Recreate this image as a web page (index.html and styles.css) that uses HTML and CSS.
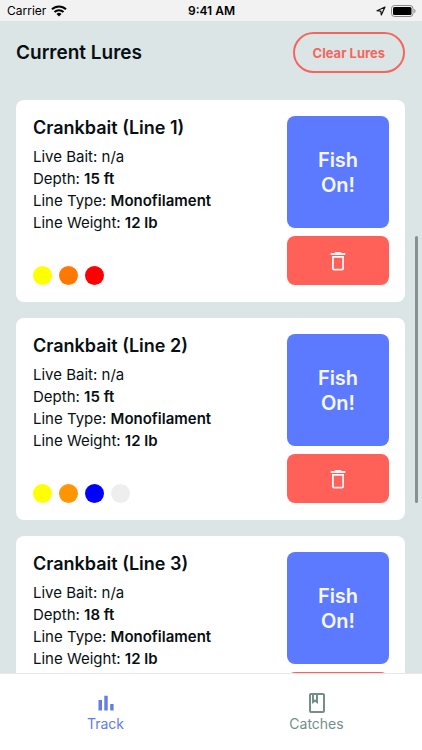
FILE: index.html
```html
<!DOCTYPE html>
<html lang="en">
<head>
<meta charset="utf-8">
<meta name="viewport" content="width=device-width, initial-scale=1">
<title>Current Lures</title>
<link rel="stylesheet" href="styles.css">
</head>
<body>
<svg class="sprite" aria-hidden="true">
  <symbol id="trash" viewBox="0 0 24 24"><path d="M6 19.500c0 1.100.9 2 2 2h8c1.100 0 2-.9 2-2V7H6v12.500zM7.800 8.800h8.400v10.900H7.800V8.800zM15.500 4l-1-1h-5l-1 1H4.700v2h14.600V4h-3.800z"/></symbol>
</svg>
<div class="status">
  <div class="status-left">
    <span>Carrier</span>
    <svg width="16" height="12" viewBox="0 0 16 12" aria-hidden="true">
      <path d="M1 4.300a10 10 0 0 1 14 0M3.500 7a6.400 6.400 0 0 1 9 0" fill="none" stroke="#000" stroke-width="2"/>
      <path d="M8 11.500 5.500 9a3.600 3.600 0 0 1 5 0z"/>
    </svg>
  </div>
  <strong class="status-time">9:41 AM</strong>
  <div class="status-right">
    <svg width="10" height="10" viewBox="0 0 10 10" aria-hidden="true"><path d="M9 1 1 4.700l3.800.5L5.300 9z" fill="none" stroke="#111" stroke-width="1.200" stroke-linejoin="round"/></svg>
    <svg width="25" height="12" viewBox="0 0 25 12" aria-hidden="true">
      <rect x=".5" y=".5" width="21.500" height="11" rx="3" fill="none" stroke="#888"/>
      <rect x="2" y="2" width="18.500" height="8" rx="1.500"/>
      <path d="M23.300 4v4c.8-.3 1.200-1.100 1.200-2s-.4-1.700-1.200-2z" fill="#888"/>
    </svg>
  </div>
</div>
<main class="screen">
  <header class="header">
    <h1>Current Lures</h1>
    <button class="clear" type="button">Clear Lures</button>
  </header>
  <section class="cards">
    <article class="card">
      <div class="info">
        <h2>Crankbait (Line 1)</h2>
        <p>Live Bait: n/a</p>
        <p>Depth: <b>15 ft</b></p>
        <p>Line Type: <b>Monofilament</b></p>
        <p>Line Weight: <b>12 lb</b></p>
        <div class="colors"><i class="dot yellow"></i><i class="dot deep-orange"></i><i class="dot red"></i></div>
      </div>
      <div class="actions">
        <button class="fish" type="button">Fish<br>On!</button>
        <button class="delete" type="button" aria-label="Delete"><svg width="24" height="24"><use href="#trash"/></svg></button>
      </div>
    </article>
    <article class="card">
      <div class="info">
        <h2>Crankbait (Line 2)</h2>
        <p>Live Bait: n/a</p>
        <p>Depth: <b>15 ft</b></p>
        <p>Line Type: <b>Monofilament</b></p>
        <p>Line Weight: <b>12 lb</b></p>
        <div class="colors"><i class="dot yellow"></i><i class="dot orange"></i><i class="dot blue"></i><i class="dot pale"></i></div>
      </div>
      <div class="actions">
        <button class="fish" type="button">Fish<br>On!</button>
        <button class="delete" type="button" aria-label="Delete"><svg width="24" height="24"><use href="#trash"/></svg></button>
      </div>
    </article>
    <article class="card">
      <div class="info">
        <h2>Crankbait (Line 3)</h2>
        <p>Live Bait: n/a</p>
        <p>Depth: <b>18 ft</b></p>
        <p>Line Type: <b>Monofilament</b></p>
        <p>Line Weight: <b>12 lb</b></p>
      </div>
      <div class="actions">
        <button class="fish" type="button">Fish<br>On!</button>
        <button class="delete" type="button" aria-label="Delete"><svg width="24" height="24"><use href="#trash"/></svg></button>
      </div>
    </article>
  </section>
</main>
<div class="scroll-thumb"></div>
<nav class="tabs">
  <a class="tab active" href="#track">
    <svg width="24" height="24" viewBox="0 0 24 24" aria-hidden="true"><path d="M4.500 9H8v10.500H4.500zM10.300 4.800h3.400v14.700h-3.400zM16.200 13h3.400v6.500h-3.400z"/></svg>
    <span>Track</span>
  </a>
  <a class="tab" href="#catches">
    <svg width="24" height="24" viewBox="0 0 24 24" aria-hidden="true"><path d="M18 2H6c-1.100 0-2 .9-2 2v16c0 1.100.9 2 2 2h12c1.100 0 2-.9 2-2V4c0-1.100-.9-2-2-2zM9 4h2v5l-1-.75L9 9V4zm9 16H6V4h1v9l3-2.250L13 13V4h5v16z"/></svg>
    <span>Catches</span>
  </a>
</nav>
</body>
</html>
```

FILE: styles.css
```css
* {
  box-sizing: border-box;
}

body {
  margin: 0;
  height: 100vh;
  display: flex;
  flex-direction: column;
  position: relative;
  background: #dce5e6;
  color: #080f12;
  font-family: Inter, "Liberation Sans", sans-serif;
  font-size: 15px;
}

h1, h2, p {
  margin: 0;
}

button {
  border: 0;
  padding: 0;
  font-family: inherit;
  cursor: pointer;
}

.sprite {
  position: absolute;
  width: 0;
  height: 0;
}

.status {
  flex: none;
  display: grid;
  grid-template-columns: 1fr auto 1fr;
  align-items: center;
  height: 21px;
  padding: 0 6px 0 7px;
  background: #f2f2f2;
  color: #000;
  font-size: 12px;
}

.status-left,
.status-right {
  display: flex;
  align-items: center;
  gap: 5px;
}

.status-right {
  justify-content: flex-end;
}

.status-time {
  font-weight: 600;
}

.screen {
  flex: 1;
  min-height: 0;
  overflow-y: auto;
  scrollbar-width: none;
  padding: 11px 17px 16px 16px;
}

.header {
  display: flex;
  align-items: center;
  justify-content: space-between;
  margin-bottom: 27px;
}

h1 {
  font-size: 19px;
  font-weight: 600;
}

.clear {
  height: 41px;
  padding: 0 18px;
  border: 2px solid #f4665d;
  border-radius: 21px;
  background: transparent;
  color: #f4665d;
  font-size: 13px;
  font-weight: 700;
}

.cards {
  display: flex;
  flex-direction: column;
  gap: 16px;
}

.card {
  display: flex;
  justify-content: space-between;
  gap: 16px;
  padding: 16px 16px 17px 17px;
  border-radius: 8px;
  background: #fff;
}

.info {
  display: flex;
  flex-direction: column;
  line-height: 22px;
}

h2 {
  margin-bottom: 6px;
  font-size: 18px;
  font-weight: 600;
  line-height: 24px;
}

b {
  font-weight: 600;
}

.colors {
  display: flex;
  gap: 7px;
  margin-top: auto;
}

.dot {
  width: 19px;
  height: 19px;
  border-radius: 50%;
}

.yellow { background: #ff0; }
.deep-orange { background: #ff7800; }
.orange { background: #ff9500; }
.red { background: #f00; }
.blue { background: #00f; }
.pale { background: #eee; }

.actions {
  flex: none;
  display: flex;
  flex-direction: column;
  gap: 8px;
  width: 102px;
}

.fish,
.delete {
  border-radius: 8px;
  color: #f5f7fb;
}

.fish {
  height: 112px;
  padding-top: 2px;
  background: #5c7aff;
  font-size: 20px;
  font-weight: 600;
  line-height: 25px;
}

.delete {
  display: flex;
  align-items: center;
  justify-content: center;
  height: 49px;
  background: #ff6057;
}

.delete svg {
  fill: currentColor;
}

.scroll-thumb {
  position: absolute;
  top: 236px;
  right: 4px;
  width: 3px;
  height: 267px;
  border-radius: 2px;
  background: #859092;
}

.tabs {
  flex: none;
  display: flex;
  border-top: 1px solid #e8e8e8;
  background: #fff;
}

.tab {
  flex: 1;
  display: flex;
  flex-direction: column;
  align-items: center;
  padding: 17px 0 17px;
  color: #738f8a;
  font-size: 14px;
  line-height: 18px;
  text-decoration: none;
}

.tab svg {
  fill: currentColor;
}

.active {
  color: #627ce8;
}
```
